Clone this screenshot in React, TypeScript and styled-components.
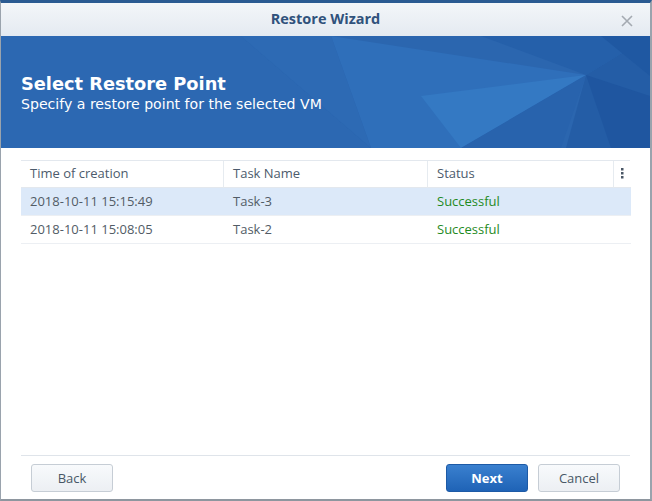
import styled, { createGlobalStyle } from "styled-components";

const GlobalStyle = createGlobalStyle`
  html, body {
    margin: 0;
    padding: 0;
    background: #ffffff;
  }
  body {
    font-family: "Open Sans", "Noto Sans", sans-serif;
  }
`;

const Window = styled.div`
  width: 652px;
  height: 501px;
  box-sizing: border-box;
  display: flex;
  flex-direction: column;
  background: #ffffff;
  border-top: 3px solid #2b5b92;
  border-left: 1px solid #9aa3ad;
  border-right: 2px solid #9aa3ad;
  border-bottom: 2px solid #8e969f;
  overflow: hidden;
`;

const TitleBar = styled.div`
  height: 33px;
  flex-shrink: 0;
  display: flex;
  align-items: center;
  justify-content: center;
  position: relative;
  background: linear-gradient(#f3f6f9, #e4eaf1);
`;

const Title = styled.div`
  font-size: 14.5px;
  font-weight: 700;
  color: #30527c;
  margin-bottom: 2px;
`;

const CloseButton = styled.div`
  position: absolute;
  right: 16px;
  top: 8px;
  width: 14px;
  height: 14px;
`;

const Banner = styled.div`
  height: 112px;
  box-sizing: border-box;
  flex-shrink: 0;
  position: relative;
  background: #2c68b2;
  display: flex;
  flex-direction: column;
  justify-content: flex-start;
  padding: 37px 20px 0 20px;
  overflow: hidden;
  font-family: "DejaVu Sans", "Open Sans", sans-serif;
`;

const BannerArt = styled.svg`
  position: absolute;
  inset: 0;
`;

const BannerTitle = styled.div`
  position: relative;
  font-size: 17.8px;
  font-weight: 700;
  color: #ffffff;
  line-height: 22px;
`;

const BannerSubtitle = styled.div`
  position: relative;
  font-size: 14.1px;
  color: #ffffff;
  line-height: 18px;
`;

const Body = styled.div`
  flex: 1;
  display: flex;
  flex-direction: column;
  padding: 12px 20px 0 20px;
`;

const Table = styled.div`
  display: grid;
  grid-template-columns: 203px 204px 186px 17px;
  border-top: 1px solid #e3e8ee;
`;

const HeaderCell = styled.div<{ $last?: boolean }>`
  box-sizing: border-box;
  height: 27px;
  display: flex;
  align-items: center;
  padding-left: ${(p) => (p.$last ? "0" : "9px")};
  padding-bottom: 2px;
  justify-content: ${(p) => (p.$last ? "center" : "flex-start")};
  font-size: 13px;
  color: #4c5b6c;
  border-right: ${(p) => (p.$last ? "none" : "1px solid #e6ebf0")};
  border-bottom: 1px solid #e3e8ee;
`;

const Row = styled.div<{ $selected?: boolean }>`
  display: contents;
  & > div {
    background: ${(p) => (p.$selected ? "#dce9f9" : "#ffffff")};
  }
`;

const Cell = styled.div<{ $success?: boolean }>`
  box-sizing: border-box;
  height: 28px;
  display: flex;
  align-items: center;
  padding-left: 9px;
  padding-bottom: 1px;
  font-size: 13px;
  color: ${(p) => (p.$success ? "#1f8a24" : "#525c66")};
  border-bottom: 1px solid #eceff3;
`;

const Spacer = styled.div`
  flex: 1;
`;

const Footer = styled.div`
  border-top: 1px solid #dfe4ea;
  height: 44px;
  display: flex;
  align-items: flex-start;
  padding: 8px 10px 0 10px;
  box-sizing: border-box;
  gap: 10px;
`;

const Button = styled.button<{ $primary?: boolean }>`
  width: 82px;
  height: 28px;
  border-radius: 3px;
  font-family: "Open Sans", "Noto Sans", sans-serif;
  font-size: 13px;
  cursor: pointer;
  border: 1px solid ${(p) => (p.$primary ? "#1d5aa6" : "#c6cdd5")};
  background: ${(p) =>
    p.$primary
      ? "linear-gradient(#3a80cf, #1f63b6)"
      : "linear-gradient(#f8fafc, #eceff3)"};
  color: ${(p) => (p.$primary ? "#ffffff" : "#485766")};
  font-weight: ${(p) => (p.$primary ? 700 : 400)};
`;

const rows = [
  { time: "2018-10-11 15:15:49", task: "Task-3", status: "Successful", selected: true },
  { time: "2018-10-11 15:08:05", task: "Task-2", status: "Successful", selected: false },
];

export default function App() {
  return (
    <>
      <GlobalStyle />
      <Window>
        <TitleBar>
          <Title>Restore Wizard</Title>
          <CloseButton>
            <svg width="14" height="14" viewBox="0 0 14 14">
              <path d="M2 2 L12 12 M12 2 L2 12" stroke="#a4aab1" strokeWidth="1.6" fill="none" />
            </svg>
          </CloseButton>
        </TitleBar>
        <Banner>
          <BannerArt width="649" height="112" viewBox="0 0 649 112">
            <polygon points="240,0 649,0 649,112 370,112" fill="#2b66af" />
            <polygon points="330,0 585,39 460,112 370,112" fill="#2f6fba" />
            <polygon points="585,39 649,0 649,112 565,112" fill="#245da6" />
            <polygon points="480,0 649,0 585,39" fill="#2560aa" />
            <polygon points="420,60 585,39 460,112" fill="#3479c3" />
            <polygon points="585,39 560,112 460,112" fill="#2863ad" />
            <polygon points="600,0 649,0 649,40" fill="#1f58a2" />
            <polygon points="585,39 649,60 649,112 610,112" fill="#1f56a0" />
            <polygon points="240,0 330,0 370,112" fill="#2d6ab4" />
          </BannerArt>
          <BannerTitle>Select Restore Point</BannerTitle>
          <BannerSubtitle>Specify a restore point for the selected VM</BannerSubtitle>
        </Banner>
        <Body>
          <Table>
            <HeaderCell>Time of creation</HeaderCell>
            <HeaderCell>Task Name</HeaderCell>
            <HeaderCell>Status</HeaderCell>
            <HeaderCell $last>
              <svg width="3" height="11" viewBox="0 0 3 11">
                <rect x="0" y="0" width="2.5" height="2.5" fill="#4a5766" />
                <rect x="0" y="4" width="2.5" height="2.5" fill="#4a5766" />
                <rect x="0" y="8" width="2.5" height="2.5" fill="#4a5766" />
              </svg>
            </HeaderCell>
            {rows.map((r) => (
              <Row key={r.time} $selected={r.selected}>
                <Cell>{r.time}</Cell>
                <Cell>{r.task}</Cell>
                <Cell $success>{r.status}</Cell>
                <Cell />
              </Row>
            ))}
          </Table>
          <Spacer />
          <Footer>
            <Button>Back</Button>
            <Spacer />
            <Button $primary>Next</Button>
            <Button>Cancel</Button>
          </Footer>
        </Body>
      </Window>
    </>
  );
}
